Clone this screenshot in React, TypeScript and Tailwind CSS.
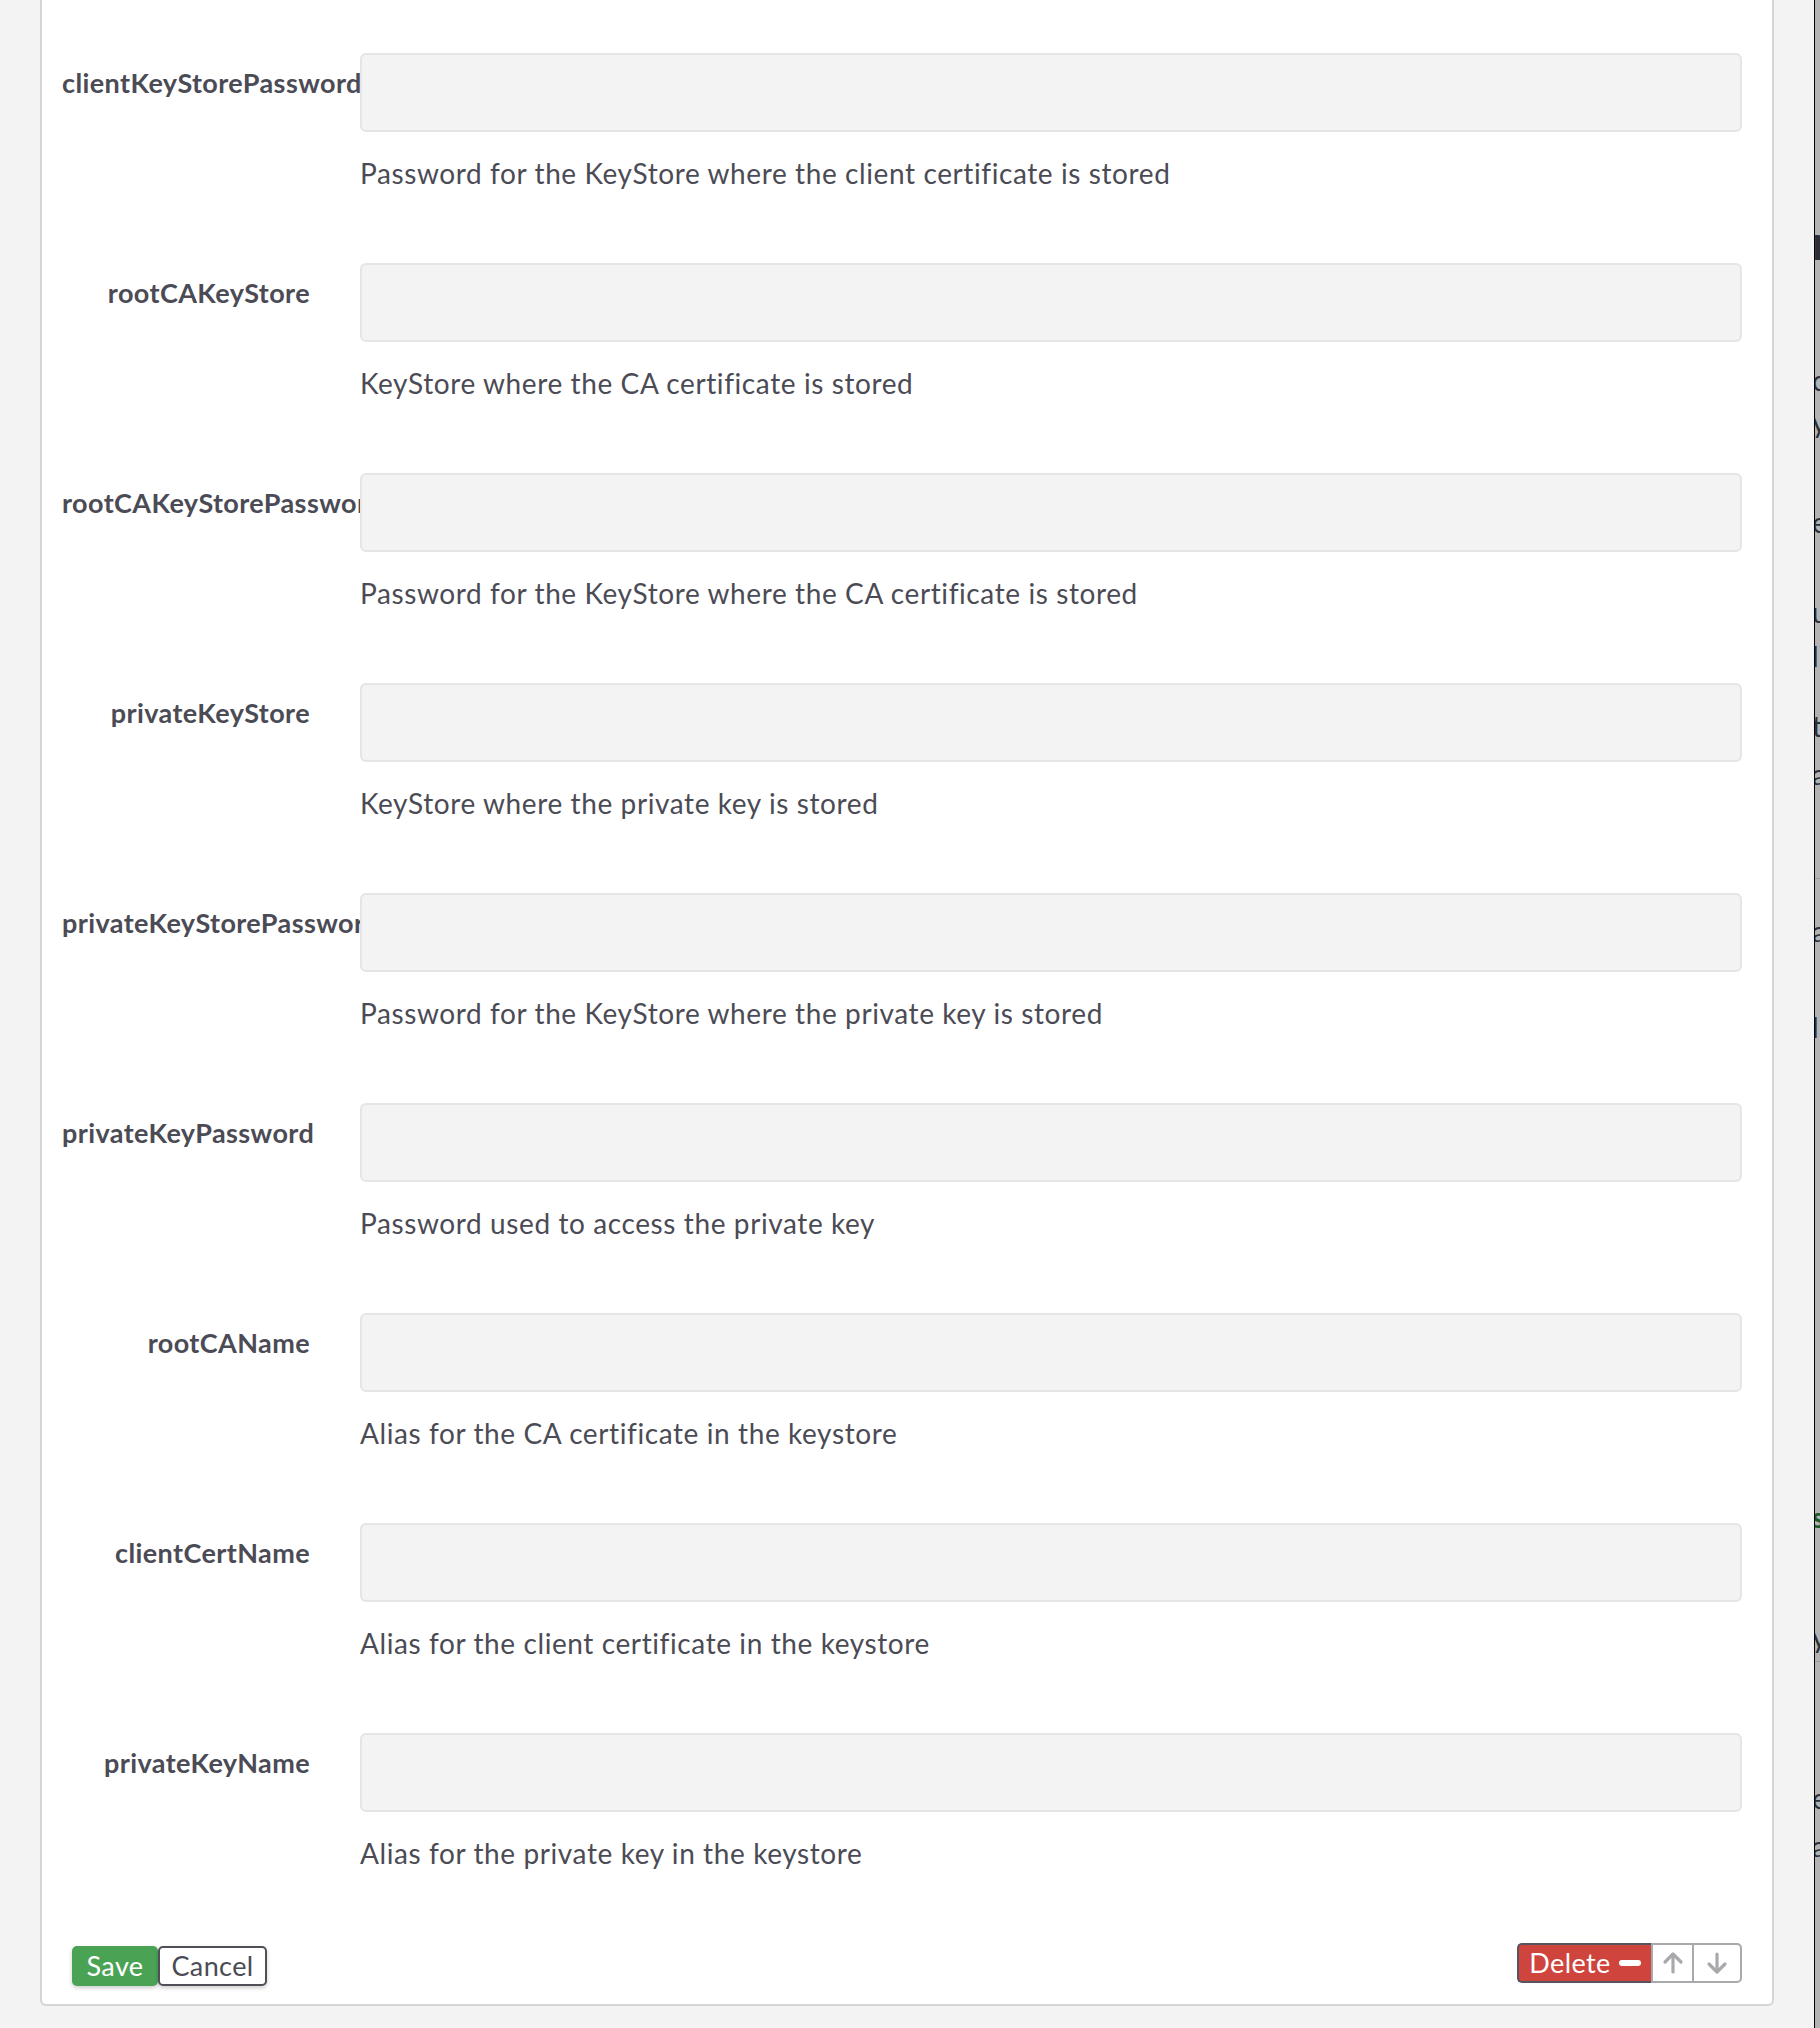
import React from "react";

const fields: [string, string][] = [
  ["clientKeyStorePassword", "Password for the KeyStore where the client certificate is stored"],
  ["rootCAKeyStore", "KeyStore where the CA certificate is stored"],
  ["rootCAKeyStorePassword", "Password for the KeyStore where the CA certificate is stored"],
  ["privateKeyStore", "KeyStore where the private key is stored"],
  ["privateKeyStorePassword", "Password for the KeyStore where the private key is stored"],
  ["privateKeyPassword", "Password used to access the private key"],
  ["rootCAName", "Alias for the CA certificate in the keystore"],
  ["clientCertName", "Alias for the client certificate in the keystore"],
  ["privateKeyName", "Alias for the private key in the keystore"],
];

function ArrowUp() {
  return (
    <svg width="22" height="24" viewBox="0 0 22 24" fill="none" stroke="#a9a9ad" strokeWidth="3.2" strokeLinecap="round" strokeLinejoin="round">
      <path d="M11 21V4" />
      <path d="M3 11l8-8 8 8" />
    </svg>
  );
}

function ArrowDown() {
  return (
    <svg width="22" height="24" viewBox="0 0 22 24" fill="none" stroke="#a9a9ad" strokeWidth="3.2" strokeLinecap="round" strokeLinejoin="round">
      <path d="M11 3v17" />
      <path d="M3 13l8 8 8-8" />
    </svg>
  );
}

export default function App() {
  return (
    <div
      className="flex h-[2028px] w-[1820px] overflow-hidden bg-[#f3f3f3] text-[#4b4b55]"
      style={{ fontFamily: "Lato, 'Open Sans', sans-serif" }}
    >
      <div className="w-[40px] shrink-0" />
      <div className="flex h-[2006px] w-[1734px] shrink-0 flex-col rounded-b-[6px] border-2 border-t-0 border-[#d5d5d9] bg-white pl-[20px] pr-[30px] pt-[53px] pb-[18px]">
        {fields.map(([label, help]) => (
          <div key={label} className="flex h-[210px]">
            <div className="w-[298px] shrink-0 overflow-hidden whitespace-nowrap pr-[50px] pt-[14px] text-right text-[27px] font-bold leading-[1.2] tracking-[0.4px]">
              {label}
            </div>
            <div className="flex-1">
              <div className="h-[79px] rounded-[6px] border-2 border-[#e5e5e5] bg-[#f3f3f3]" />
              <p className="mt-[25px] text-[28px] leading-[1.2] tracking-[0.6px]">{help}</p>
            </div>
          </div>
        ))}
        <div className="flex h-[43px] items-start justify-between">
          <div className="ml-[10px] mt-[3px] flex">
            <button className="flex h-[40px] w-[86px] items-center justify-center rounded-[5px] bg-[#4aa355] text-[27px] tracking-[0.4px] text-white shadow-[0_2px_4px_rgba(0,0,0,0.2)]">
              Save
            </button>
            <button className="flex h-[40px] w-[109px] items-center justify-center rounded-[5px] border-2 border-[#4f4f57] bg-white text-[27px] tracking-[0.4px] text-[#4b4b55] shadow-[0_2px_4px_rgba(0,0,0,0.2)]">
              Cancel
            </button>
          </div>
          <div className="flex h-[40px]">
            <button className="flex h-[40px] w-[134px] items-center justify-center gap-[8px] rounded-l-[5px] border-2 border-r-0 border-[#55555d] bg-[#d0443e] text-[27px] tracking-[0.4px] text-white">
              <span>Delete</span>
              <span className="h-[6px] w-[22px] rounded-full bg-white" />
            </button>
            <button className="flex h-[40px] w-[43px] items-center justify-center border-2 border-[#a9a9ad] bg-white">
              <ArrowUp />
            </button>
            <button className="flex h-[40px] w-[48px] items-center justify-center rounded-r-[5px] border-2 border-l-0 border-[#a9a9ad] bg-white">
              <ArrowDown />
            </button>
          </div>
        </div>
      </div>
      <div className="w-[40px] shrink-0" />
      <div className="h-full w-[6px] shrink-0 overflow-hidden border-l border-black bg-[#b3b3b3] text-[#2a2f3a]">
        <div className="-ml-[3px] whitespace-nowrap" style={{ fontFamily: "Lato, sans-serif" }}>
          <div className="mt-[212px] h-[60px] text-[48px] font-bold leading-[60px]">n</div>
          <div className="mt-[88px] h-[40px] text-[28px] leading-[40px]">c</div>
          <div className="mt-[2px] h-[40px] text-[28px] leading-[40px]">y</div>
          <div className="mt-[60px] h-[40px] text-[28px] leading-[40px]">e</div>
          <div className="mt-[50px] h-[40px] text-[28px] leading-[40px]">u</div>
          <div className="mt-[4px] h-[40px] text-[28px] leading-[40px]">l</div>
          <div className="mt-[30px] h-[40px] text-[28px] leading-[40px]">t</div>
          <div className="mt-[8px] h-[40px] text-[28px] leading-[40px]">a</div>
          <div className="mt-[84px] h-px bg-[#9c9c9c]" />
          <div className="mt-[32px] h-[40px] text-[28px] leading-[40px]">a</div>
          <div className="mt-[56px] h-[40px] text-[28px] leading-[40px]">l</div>
          <div className="mt-[450px] h-[40px] text-[28px] font-bold leading-[40px] text-[#1f5a2a]">s</div>
          <div className="mt-[80px] h-[40px] text-[28px] leading-[40px]">y</div>
          <div className="mt-[4px] h-px bg-[#9c9c9c]" />
          <div className="mt-[116px] h-[40px] text-[28px] leading-[40px]">e</div>
          <div className="mt-[8px] h-[40px] text-[28px] leading-[40px]">a</div>
        </div>
      </div>
    </div>
  );
}
